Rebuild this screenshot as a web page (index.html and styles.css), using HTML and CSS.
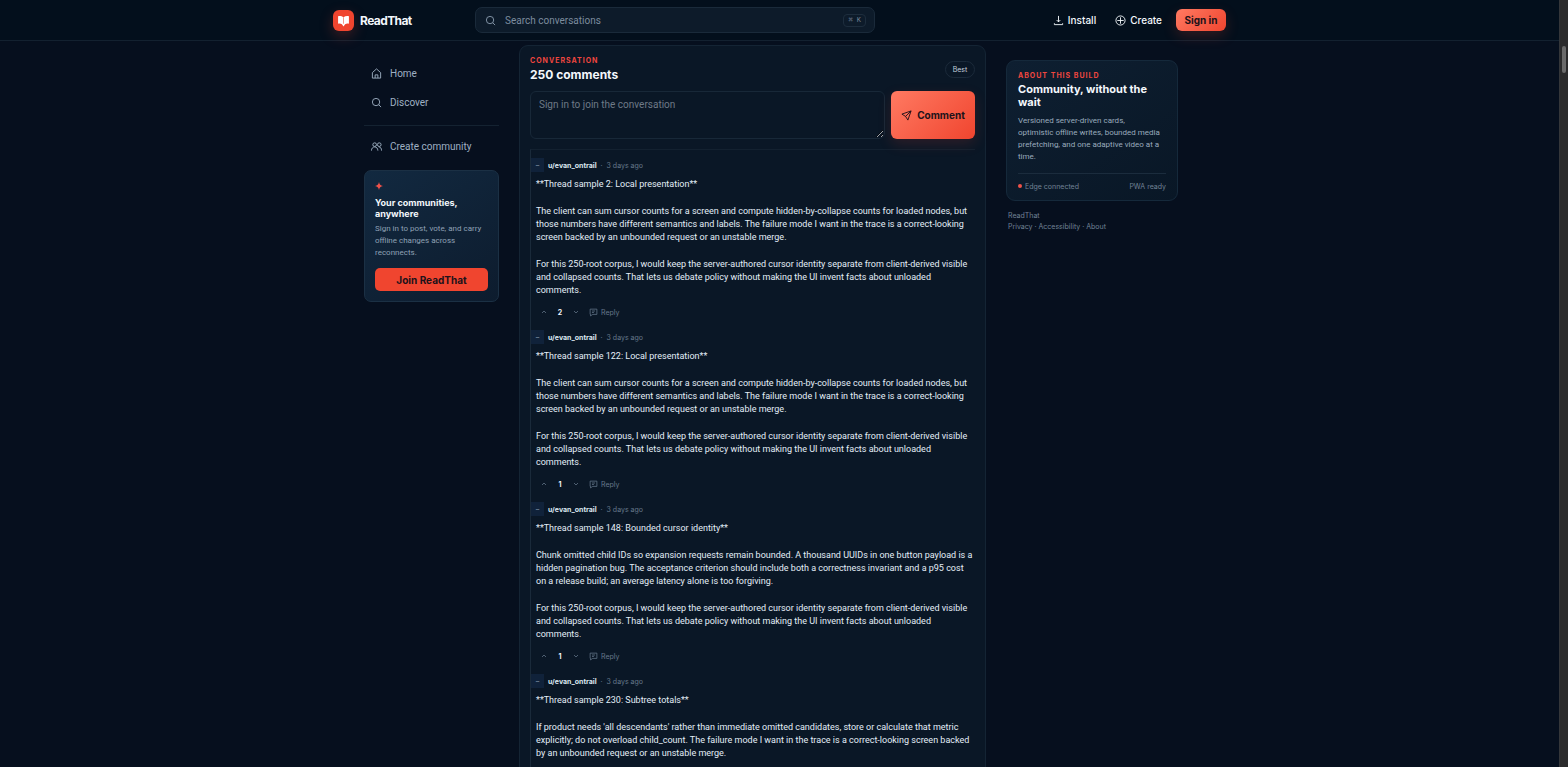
FILE: index.html
```html
<!DOCTYPE html>
<html lang="en">
<head>
  <meta charset="UTF-8">
  <meta name="viewport" content="width=device-width, initial-scale=1.0">
  <title>ReadThat</title>
  <link rel="stylesheet" href="styles.css">
</head>
<body>

  <svg class="sprite" aria-hidden="true">
    <symbol id="icon-search" viewBox="0 0 24 24"><circle cx="11" cy="11" r="8"/><path d="M17 17l5 5"/></symbol>
    <symbol id="icon-reply" viewBox="0 0 24 24"><path d="M3 3h18v14H10l-6 4v-4H3z"/><path d="M8 8h8M8 12h5"/></symbol>
    <symbol id="icon-up" viewBox="0 0 24 24"><path d="M4 16l8-8 8 8"/></symbol>
    <symbol id="icon-down" viewBox="0 0 24 24"><path d="M4 8l8 8 8-8"/></symbol>
  </svg>

  <div class="page">
    <header class="topbar">
      <div class="topbar-inner">
        <a href="#" class="brand">
          <span class="brand-mark">
            <svg viewBox="0 0 24 24"><path d="M2 4c4-1 7 0 10 2 3-2 6-3 10-2v14c-3-1-5 0-7 1l-3 4-3-4c-2-1-4-2-7-1z" fill="#fff"/><path d="M12 6v12" stroke="#f0452f" stroke-width="1"/></svg>
          </span>
          ReadThat
        </a>
        <label class="search">
          <svg class="icon"><use href="#icon-search"/></svg>
          <input type="search" class="search-input" placeholder="Search conversations" aria-label="Search conversations">
          <kbd class="search-key">⌘ K</kbd>
        </label>
        <nav class="actions">
          <button class="action-button"><svg class="icon" viewBox="0 0 24 24"><path d="M12 2v13M8 11l4 4 4-4M3 18v3h18v-3"/></svg>Install</button>
          <button class="action-button"><svg class="icon" viewBox="0 0 24 24"><circle cx="12" cy="12" r="10"/><path d="M12 5v14M5 12h14"/></svg>Create</button>
          <button class="signin-button">Sign in</button>
        </nav>
      </div>
    </header>

    <div class="layout">
      <aside class="sidebar">
        <nav class="side-nav">
          <a href="#" class="side-link"><svg class="icon" viewBox="0 0 24 24"><path d="M3 10l9-8 9 8v12H3zM9 22v-7h6v7"/></svg>Home</a>
          <a href="#" class="side-link"><svg class="icon"><use href="#icon-search"/></svg>Discover</a>
          <hr class="side-line">
          <a href="#" class="side-link"><svg class="icon" viewBox="0 0 24 24"><circle cx="8" cy="8" r="4"/><path d="M1 21c0-5 3-8 7-8s7 3 7 8"/><circle cx="18" cy="8" r="4"/><path d="M17 13c4 0 6 3 6 8"/></svg>Create community</a>
        </nav>
        <section class="join-card">
          <svg class="join-star" viewBox="0 0 24 24"><path d="M12 0c2 8 4 10 12 12-8 2-10 4-12 12-2-8-4-10-12-12 8-2 10-4 12-12z"/></svg>
          <h2 class="join-title">Your communities, anywhere</h2>
          <p class="join-text">Sign in to post, vote, and carry offline changes across reconnects.</p>
          <button class="join-button">Join ReadThat</button>
        </section>
      </aside>

      <main class="conversation">
        <div class="conversation-head">
          <div>
            <p class="eyebrow">Conversation</p>
            <h1 class="conversation-title">250 comments</h1>
          </div>
          <button class="sort-button">Best</button>
        </div>
        <form class="composer">
          <textarea class="composer-input" placeholder="Sign in to join the conversation" aria-label="Comment"></textarea>
          <button type="button" class="composer-button"><svg class="icon" viewBox="0 0 24 24"><path d="M22 2L2 9l8 5 5 8zM22 2L10 14"/></svg>Comment</button>
        </form>

        <div class="thread">
          <article class="comment">
            <div class="comment-head">
              <button class="collapse-button" aria-label="Collapse">–</button>
              <a href="#" class="author">u/evan_ontrail</a>
              <span class="time">· &nbsp;3 days ago</span>
            </div>
            <div class="comment-body">
              <p>**Thread sample 2: Local presentation**</p>
              <p>The client can sum cursor counts for a screen and compute hidden-by-collapse counts for loaded nodes, but those numbers have different semantics and labels. The failure mode I want in the trace is a correct-looking screen backed by an unbounded request or an unstable merge.</p>
              <p>For this 250-root corpus, I would keep the server-authored cursor identity separate from client-derived visible and collapsed counts. That lets us debate policy without making the UI invent facts about unloaded comments.</p>
            </div>
            <div class="comment-actions">
              <button class="vote-button" aria-label="Upvote"><svg><use href="#icon-up"/></svg></button>
              <span class="score">2</span>
              <button class="vote-button" aria-label="Downvote"><svg><use href="#icon-down"/></svg></button>
              <button class="reply-button"><svg><use href="#icon-reply"/></svg>Reply</button>
            </div>
          </article>

          <article class="comment">
            <div class="comment-head">
              <button class="collapse-button" aria-label="Collapse">–</button>
              <a href="#" class="author">u/evan_ontrail</a>
              <span class="time">· &nbsp;3 days ago</span>
            </div>
            <div class="comment-body">
              <p>**Thread sample 122: Local presentation**</p>
              <p>The client can sum cursor counts for a screen and compute hidden-by-collapse counts for loaded nodes, but those numbers have different semantics and labels. The failure mode I want in the trace is a correct-looking screen backed by an unbounded request or an unstable merge.</p>
              <p>For this 250-root corpus, I would keep the server-authored cursor identity separate from client-derived visible and collapsed counts. That lets us debate policy without making the UI invent facts about unloaded comments.</p>
            </div>
            <div class="comment-actions">
              <button class="vote-button" aria-label="Upvote"><svg><use href="#icon-up"/></svg></button>
              <span class="score">1</span>
              <button class="vote-button" aria-label="Downvote"><svg><use href="#icon-down"/></svg></button>
              <button class="reply-button"><svg><use href="#icon-reply"/></svg>Reply</button>
            </div>
          </article>

          <article class="comment">
            <div class="comment-head">
              <button class="collapse-button" aria-label="Collapse">–</button>
              <a href="#" class="author">u/evan_ontrail</a>
              <span class="time">· &nbsp;3 days ago</span>
            </div>
            <div class="comment-body">
              <p>**Thread sample 148: Bounded cursor identity**</p>
              <p>Chunk omitted child IDs so expansion requests remain bounded. A thousand UUIDs in one button payload is a hidden pagination bug. The acceptance criterion should include both a correctness invariant and a p95 cost on a release build; an average latency alone is too forgiving.</p>
              <p>For this 250-root corpus, I would keep the server-authored cursor identity separate from client-derived visible and collapsed counts. That lets us debate policy without making the UI invent facts about unloaded comments.</p>
            </div>
            <div class="comment-actions">
              <button class="vote-button" aria-label="Upvote"><svg><use href="#icon-up"/></svg></button>
              <span class="score">1</span>
              <button class="vote-button" aria-label="Downvote"><svg><use href="#icon-down"/></svg></button>
              <button class="reply-button"><svg><use href="#icon-reply"/></svg>Reply</button>
            </div>
          </article>

          <article class="comment">
            <div class="comment-head">
              <button class="collapse-button" aria-label="Collapse">–</button>
              <a href="#" class="author">u/evan_ontrail</a>
              <span class="time">· &nbsp;3 days ago</span>
            </div>
            <div class="comment-body">
              <p>**Thread sample 230: Subtree totals**</p>
              <p>If product needs 'all descendants' rather than immediate omitted candidates, store or calculate that metric explicitly; do not overload child_count. The failure mode I want in the trace is a correct-looking screen backed by an unbounded request or an unstable merge.</p>
            </div>
          </article>
        </div>
      </main>

      <aside class="about">
        <section class="about-card">
          <p class="eyebrow">About this build</p>
          <h2 class="about-title">Community, without the wait</h2>
          <p class="about-text">Versioned server-driven cards,<br> optimistic offline writes, bounded media prefetching, and one adaptive video at a time.</p>
          <div class="about-status">
            <span class="status-edge">Edge connected</span>
            <span>PWA ready</span>
          </div>
        </section>
        <footer class="about-footer">
          <p>ReadThat</p>
          <p><a href="#">Privacy</a> · <a href="#">Accessibility</a> · <a href="#">About</a></p>
        </footer>
      </aside>
    </div>
  </div>

  <div class="scrollbar"><div class="scrollbar-thumb"></div></div>

</body>
</html>
```
FILE: styles.css
```css
* {
  box-sizing: border-box;
}

body {
  margin: 0;
  height: 100vh;
  overflow: hidden;
  display: flex;
  background-color: #060f1e;
  color: #f4f8fc;
  font-family: Inter, "Liberation Sans", sans-serif;
  font-size: 10px;
}

p, h1, h2 {
  margin: 0;
}

a {
  color: inherit;
  text-decoration: none;
}

button, input, textarea {
  font: inherit;
  color: inherit;
}

button {
  display: flex;
  align-items: center;
  justify-content: center;
  padding: 0;
  border: none;
  background: none;
  cursor: pointer;
}

svg {
  fill: none;
  stroke: currentColor;
  stroke-width: 2;
}

.sprite {
  display: none;
}

.icon {
  width: 11px;
  height: 11px;
  flex: none;
}

.page {
  flex: 1;
  min-width: 0;
  height: 100vh;
  overflow: hidden;
}

.search-input,
.side-link,
.join-text,
.composer-input,
.comment-body,
.about-text {
  font-family: Roboto, "Liberation Sans", sans-serif;
}

/* top bar */

.topbar {
  height: 41px;
  background-color: #030f1c;
  border-bottom: 1px solid #132130;
}

.topbar-inner {
  display: flex;
  align-items: center;
  max-width: 893px;
  height: 40px;
  margin: 0 auto;
}

.brand {
  display: flex;
  align-items: center;
  gap: 6px;
  width: 142px;
  font-size: 12px;
  font-weight: 700;
  letter-spacing: -0.05em;
}

.brand-mark {
  display: flex;
  align-items: center;
  justify-content: center;
  width: 21px;
  height: 21px;
  border-radius: 6px;
  background-color: #f0452f;
  box-shadow: 0 5px 14px rgba(240, 69, 47, 0.25);
}

.brand-mark svg {
  width: 13px;
  height: 13px;
  stroke: none;
}

.search {
  display: flex;
  align-items: center;
  gap: 9px;
  width: 400px;
  height: 26px;
  padding: 0 8px 0 9px;
  border: 1px solid #1a2a3a;
  border-radius: 7px;
  background-color: #0d1b2a;
  color: #8a9bae;
}

.search-input {
  flex: 1;
  min-width: 0;
  padding: 0;
  border: none;
  outline: none;
  background: none;
}

.search-input::placeholder {
  color: #7c8c9e;
}

.search-key {
  padding: 0 4px;
  border: 1px solid #1d2d3d;
  border-radius: 4px;
  color: #718295;
  font-family: "Liberation Mono", monospace;
  font-size: 7px;
  line-height: 11px;
}

.actions {
  display: flex;
  align-items: center;
  gap: 19px;
  margin-left: auto;
}

.action-button {
  gap: 4px;
  font-weight: 500;
}

.signin-button {
  width: 50px;
  height: 22px;
  margin-left: -5px;
  border-radius: 6px;
  background: linear-gradient(135deg, #ff7a62, #f0452f);
  box-shadow: 0 5px 14px rgba(240, 69, 47, 0.2);
  color: #20121a;
  font-weight: 700;
}

/* columns */

.layout {
  display: grid;
  grid-template-columns: 135px 467px 172px;
  justify-content: center;
  align-items: start;
  gap: 20px;
  padding: 4px 17px 0 0;
}

.sidebar {
  padding-top: 14px;
}

.side-link {
  display: flex;
  align-items: center;
  gap: 8px;
  height: 29px;
  padding-left: 7px;
  color: #9fb0c3;
}

.side-line {
  height: 1px;
  margin: 8px 0 6px;
  border: none;
  background-color: #142231;
}

.join-card {
  margin-top: 9px;
  padding: 11px 10px 10px;
  border: 1px solid #1b3044;
  border-radius: 7px;
  background: linear-gradient(145deg, #122940, #0d1c2e);
}

.join-star {
  display: block;
  width: 8px;
  height: 8px;
  margin-bottom: 7px;
  fill: #f0524a;
  stroke: none;
}

.join-title {
  font-size: 9px;
  line-height: 11px;
}

.join-text {
  margin-top: 4px;
  color: #8fa1b5;
  font-size: 8px;
  line-height: 12px;
}

.join-button {
  width: 100%;
  height: 23px;
  margin-top: 9px;
  border-radius: 5px;
  background-color: #f0452f;
  color: #20121a;
  font-weight: 700;
}

/* conversation */

.conversation {
  padding: 10px;
  border: 1px solid #142434;
  border-radius: 9px;
  background-color: #0a1726;
}

.conversation-head {
  display: flex;
  align-items: center;
  justify-content: space-between;
  height: 27px;
}

.eyebrow {
  color: #f0463f;
  font-size: 7px;
  font-weight: 700;
  line-height: 8px;
  letter-spacing: 1px;
  text-transform: uppercase;
}

.conversation-title {
  margin-top: 2px;
  font-size: 12px;
  line-height: 16px;
}

.sort-button {
  width: 30px;
  height: 17px;
  border: 1px solid #1b2a3a;
  border-radius: 9px;
  color: #c3cfdb;
  font-size: 7px;
}

.composer {
  display: flex;
  gap: 6px;
  margin-top: 8px;
}

.composer-input {
  flex: 1;
  height: 48px;
  padding: 7px 8px;
  border: 1px solid #182838;
  border-radius: 6px;
  outline: none;
  background-color: #0a1726;
}

.composer-input::placeholder {
  color: #6e7a86;
}

.composer-button {
  gap: 5px;
  width: 84px;
  height: 48px;
  border-radius: 6px;
  background: linear-gradient(135deg, #ff7a62, #f0452f);
  box-shadow: 0 5px 14px rgba(240, 69, 47, 0.15);
  color: #20121a;
  font-weight: 700;
}

.thread {
  margin-top: 10px;
  padding-top: 8px;
  border-top: 1px solid #132130;
  border-left: 1px solid #1a2a3a;
}

.comment {
  padding-bottom: 10px;
}

.comment-head {
  display: flex;
  align-items: center;
  gap: 4px;
  height: 14px;
  font-size: 7px;
}

.collapse-button {
  width: 13px;
  height: 14px;
  background-color: #10223a;
  color: #8fa1b5;
}

.author {
  color: #dbe6f0;
  font-weight: 700;
}

.time {
  color: #66788b;
}

.comment-body {
  display: flex;
  flex-direction: column;
  gap: 14px;
  margin-top: 6px;
  padding-left: 5px;
  color: #e4eef8;
  font-size: 9px;
  line-height: 13px;
}

.comment-actions {
  display: flex;
  align-items: center;
  height: 16px;
  margin-top: 7px;
  padding-left: 5px;
  color: #66788b;
  font-size: 7px;
}

.vote-button {
  width: 16px;
  height: 16px;
}

.vote-button svg {
  width: 6px;
  height: 6px;
  stroke-width: 3;
}

.score {
  width: 16px;
  color: #f4f8fc;
  font-weight: 700;
  text-align: center;
}

.reply-button {
  gap: 3px;
  margin-left: 5px;
}

.reply-button svg {
  width: 9px;
  height: 9px;
}

/* about column */

.about {
  padding-top: 15px;
}

.about-card {
  padding: 11px 11px 9px;
  border: 1px solid #15293b;
  border-radius: 9px;
  background: linear-gradient(145deg, #0e1f31, #091726);
}

.about-title {
  margin-top: 3px;
  font-size: 11px;
  line-height: 13px;
}

.about-text {
  margin-top: 6px;
  color: #9aabbd;
  font-size: 8px;
  line-height: 12px;
}

.about-status {
  display: flex;
  justify-content: space-between;
  margin-top: 10px;
  padding-top: 8px;
  border-top: 1px solid #1b2c3d;
  color: #718295;
  font-size: 7px;
  line-height: 9px;
}

.status-edge::before {
  content: "";
  display: inline-block;
  width: 4px;
  height: 4px;
  margin-right: 3px;
  border-radius: 50%;
  background-color: #f0524a;
  vertical-align: 1px;
}

.about-footer {
  padding: 9px 2px;
  color: #718295;
  font-size: 7px;
  line-height: 11px;
}

/* scrollbar */

.scrollbar {
  width: 9px;
  padding: 46px 2px 0;
  border-left: 1px solid #34363a;
  background-color: #2b2b2c;
}

.scrollbar-thumb {
  height: 27px;
  border-radius: 3px;
  background-color: #6b6b6b;
}
```
